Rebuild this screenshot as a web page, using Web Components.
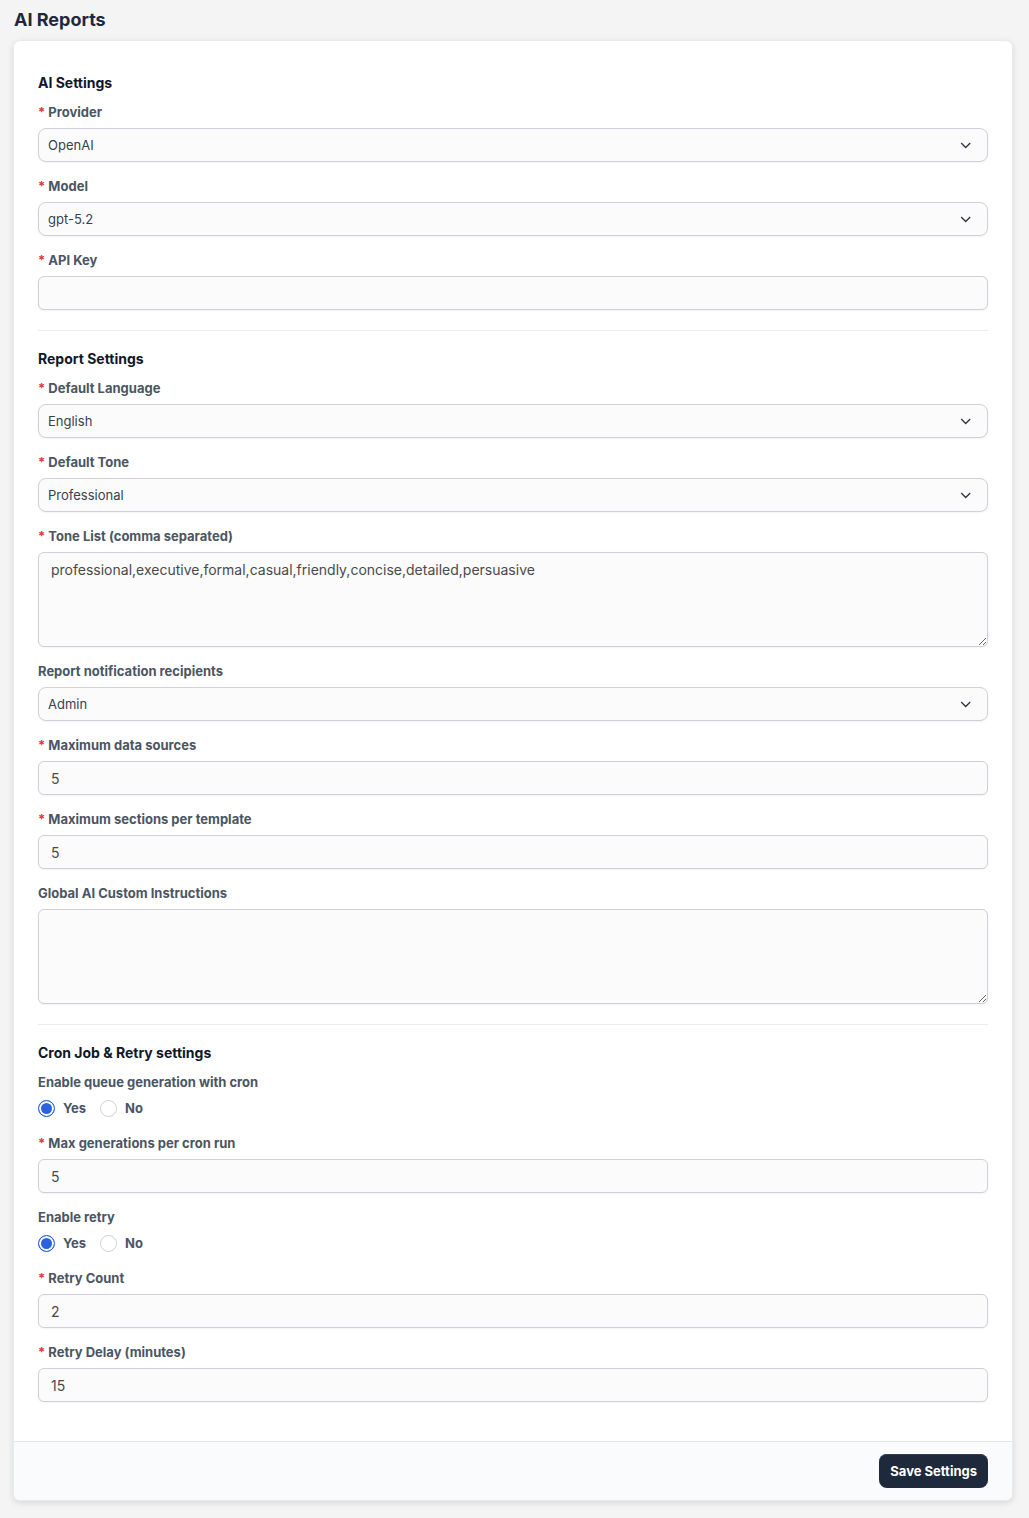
<!DOCTYPE html>
<html lang="en">
<head>
<meta charset="utf-8">
<meta name="viewport" content="width=device-width, initial-scale=1">
<title>AI Reports</title>
<style>
    body{
        margin: 0;
        background: #f4f4f4;
        color: #1e293b;
        font-family: Inter, "Liberation Sans", sans-serif;
        font-size: 13px;
        line-height: 20px;
    }
</style>
</head>
<body>
<settings-page title="AI Reports">
    <settings-section heading="AI Settings">
        <select-field label="Provider" options="OpenAI,Anthropic,Gemini" required></select-field>
        <select-field label="Model" options="gpt-5.2,gpt-5,gpt-4.1" required></select-field>
        <text-field label="API Key" required></text-field>
    </settings-section>
    <settings-section heading="Report Settings">
        <select-field label="Default Language" options="English,French,Spanish" required></select-field>
        <select-field label="Default Tone" options="Professional,Executive,Formal" required></select-field>
        <area-field label="Tone List (comma separated)" value="professional,executive,formal,casual,friendly,concise,detailed,persuasive" required></area-field>
        <select-field label="Report notification recipients" options="Admin,Staff"></select-field>
        <text-field label="Maximum data sources" value="5" required></text-field>
        <text-field label="Maximum sections per template" value="5" required></text-field>
        <area-field label="Global AI Custom Instructions"></area-field>
    </settings-section>
    <settings-section heading="Cron Job &amp; Retry settings">
        <yes-no-field label="Enable queue generation with cron"></yes-no-field>
        <text-field label="Max generations per cron run" value="5" required></text-field>
        <yes-no-field label="Enable retry"></yes-no-field>
        <text-field label="Retry Count" value="2" required></text-field>
        <text-field label="Retry Delay (minutes)" value="15" required></text-field>
    </settings-section>
    <save-button slot="footer">Save Settings</save-button>
</settings-page>

<script>
// Base class: attaches the shadow root and renders template + styles
class BaseElement extends HTMLElement{
    constructor(){
        super();
        this.attachShadow({mode: 'open'});
    }

    render(){
        const template = document.createElement('template');
        template.innerHTML = `<style>${this.getStyles()}</style>${this.getTemplate()}`;
        this.shadowRoot.replaceChildren(template.content.cloneNode(true));
    }

    connectedCallback(){
        this.render();
    }
}

class SettingsPage extends BaseElement{
    getTemplate(){
        return `
        <h1>${this.getAttribute('title')}</h1>
        <main>
            <div class="content"><slot></slot></div>
            <footer><slot name="footer"></slot></footer>
        </main>`;
    }

    getStyles(){
        return `
            :host{ display: block; padding: 8px 17px 17px 14px; }
            h1{ margin: 0 0 9px; font-size: 18px; line-height: 24px; font-weight: 700; }
            main{
                overflow: hidden;
                background: #fff;
                border-radius: 6px;
                box-shadow: 0 0 0 1px #e9eaec, 0 2px 6px 1px rgba(15, 23, 42, .12);
            }
            .content{ padding: 32px 24px 39px; }
            footer{
                display: flex;
                justify-content: flex-end;
                padding: 12px 24px;
                border-top: 1px solid #e2e5ea;
                background: #f9fbfd;
            }
        `;
    }
}

class SettingsSection extends BaseElement{
    getTemplate(){
        return `
        <section>
            <h2>${this.getAttribute('heading').replace('&', '&amp;')}</h2>
            <div class="fields"><slot></slot></div>
        </section>`;
    }

    getStyles(){
        return `
            :host{ display: block; }
            :host(:not(:first-of-type)){
                margin-top: 20px;
                padding-top: 18px;
                border-top: 1px solid #ececee;
            }
            h2{ margin: 0 0 9px; color: #0f172a; font-size: 14px; line-height: 20px; font-weight: 700; }
            .fields{ display: flex; flex-direction: column; gap: 14px; }
        `;
    }
}

// Label on top, control below. Each field only defines getControl()
class FormField extends BaseElement{
    get value(){
        return this.getAttribute('value') || '';
    }

    getLabel(){
        const star = this.hasAttribute('required') ? '<span class="star">*</span> ' : '';
        return `${star}${this.getAttribute('label')}`;
    }

    getTemplate(){
        return `<label for="control">${this.getLabel()}</label>${this.getControl()}`;
    }

    getStyles(){
        return `
            :host{ display: flex; flex-direction: column; gap: 6px; }
            label, legend{ color: #4b5563; font-weight: 700; }
            .star{ color: #dc3c3c; }
            input, select, textarea{
                box-sizing: border-box;
                width: 100%;
                margin: 0;
                border: 1px solid #cdd0d6;
                border-radius: 6px;
                background: #fbfbfb;
                color: #4a4a4a;
                font: inherit;
                font-size: 14px;
                box-shadow: 0 1px 2px rgba(0, 0, 0, .05);
            }
            input, select{ height: 34px; }
        `;
    }
}

class TextField extends FormField{
    getControl(){
        return `<input id="control" type="text" value="${this.value}">`;
    }

    getStyles(){
        return super.getStyles() + `
            input{ padding: 0 12px; }
        `;
    }
}

class AreaField extends FormField{
    getControl(){
        return `<textarea id="control">${this.value}</textarea>`;
    }

    getStyles(){
        return super.getStyles() + `
            textarea{ display: block; height: 95px; padding: 7px 12px; resize: vertical; }
        `;
    }
}

class SelectField extends FormField{
    getControl(){
        const options = this.getAttribute('options').split(',');
        return `
        <div class="select">
            <select id="control">${options.map(o => `<option>${o}</option>`).join('')}</select>
            <svg viewBox="0 0 12 8" aria-hidden="true"><path d="M1.2 2 5.7 6.5 10.2 2"/></svg>
        </div>`;
    }

    getStyles(){
        return super.getStyles() + `
            .select{ display: grid; align-items: center; }
            select, svg{ grid-area: 1 / 1; }
            select{
                appearance: none;
                padding: 0 36px 0 9px;
                border-radius: 8px;
                color: #374151;
                font-size: 13px;
            }
            svg{
                justify-self: end;
                width: 12px;
                height: 8px;
                margin-right: 16px;
                fill: none;
                stroke: #2b3440;
                stroke-width: 1.3;
                pointer-events: none;
            }
        `;
    }
}

class YesNoField extends FormField{
    getTemplate(){
        return `
        <fieldset>
            <legend>${this.getLabel()}</legend>
            <div class="choices">
                <label><input type="radio" name="choice" value="1" checked>Yes</label>
                <label><input type="radio" name="choice" value="0">No</label>
            </div>
        </fieldset>`;
    }

    getStyles(){
        return super.getStyles() + `
            fieldset{ min-width: 0; margin: 0; padding: 0; border: 0; }
            legend{ padding: 0; }
            .choices{ display: flex; align-items: flex-start; gap: 14px; margin-top: 6px; height: 21px; }
            .choices label{ display: flex; align-items: center; gap: 8px; }
            input{
                appearance: none;
                width: 17px;
                height: 17px;
                border-radius: 50%;
                background: #fff;
                box-shadow: none;
            }
            input:checked{
                border-color: #2b62dd;
                background: #2b62dd;
                box-shadow: inset 0 0 0 2px #fff;
            }
        `;
    }
}

class SaveButton extends BaseElement{
    getTemplate(){
        return `<button type="submit"><slot></slot></button>`;
    }

    getStyles(){
        return `
            :host{ display: block; }
            button{
                display: block;
                height: 34px;
                padding: 0 11px;
                border: 0;
                border-radius: 8px;
                background: #1e293b;
                color: #fff;
                font: inherit;
                font-weight: 700;
                box-shadow: inset 0 1px 0 #334155;
                cursor: pointer;
            }
        `;
    }
}

customElements.define('settings-page', SettingsPage);
customElements.define('settings-section', SettingsSection);
customElements.define('text-field', TextField);
customElements.define('area-field', AreaField);
customElements.define('select-field', SelectField);
customElements.define('yes-no-field', YesNoField);
customElements.define('save-button', SaveButton);
</script>
</body>
</html>
